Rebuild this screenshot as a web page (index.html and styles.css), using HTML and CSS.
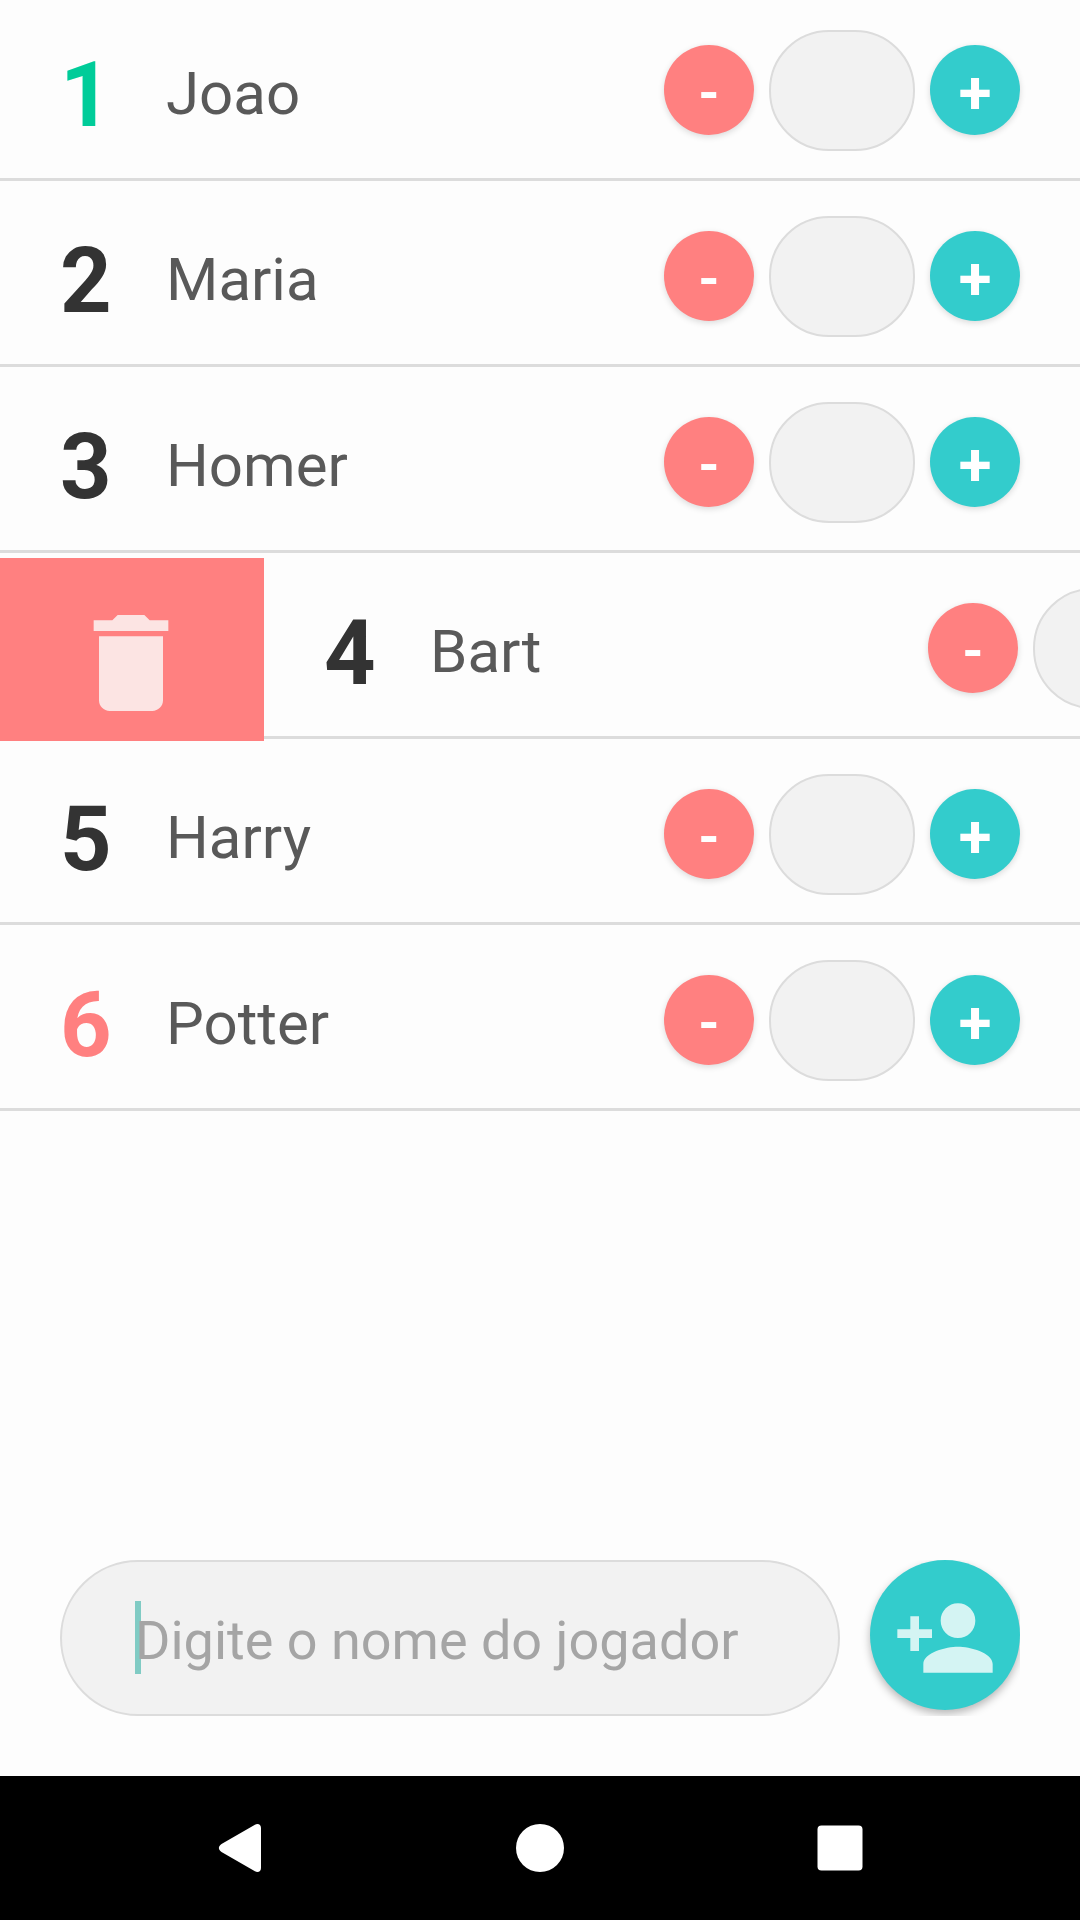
FILE: index.html
```html
<!DOCTYPE html>
<html lang="pt-BR">
<head>
<meta charset="utf-8">
<meta name="viewport" content="width=device-width, initial-scale=1">
<title>Jogadores</title>
<link rel="stylesheet" href="styles.css">
</head>
<body>
<main class="screen">
  <ol class="players">
    <li class="player">
      <div class="row">
        <span class="rank rank-first">1</span>
        <span class="name">Joao</span>
        <div class="score">
          <button class="step step-minus" type="button" aria-label="Diminuir pontos de Joao">-</button>
          <input class="points" type="text" inputmode="numeric" aria-label="Pontos de Joao">
          <button class="step step-plus" type="button" aria-label="Aumentar pontos de Joao">+</button>
        </div>
      </div>
    </li>
    <li class="player">
      <div class="row">
        <span class="rank">2</span>
        <span class="name">Maria</span>
        <div class="score">
          <button class="step step-minus" type="button" aria-label="Diminuir pontos de Maria">-</button>
          <input class="points" type="text" inputmode="numeric" aria-label="Pontos de Maria">
          <button class="step step-plus" type="button" aria-label="Aumentar pontos de Maria">+</button>
        </div>
      </div>
    </li>
    <li class="player">
      <div class="row">
        <span class="rank">3</span>
        <span class="name">Homer</span>
        <div class="score">
          <button class="step step-minus" type="button" aria-label="Diminuir pontos de Homer">-</button>
          <input class="points" type="text" inputmode="numeric" aria-label="Pontos de Homer">
          <button class="step step-plus" type="button" aria-label="Aumentar pontos de Homer">+</button>
        </div>
      </div>
    </li>
    <li class="player">
      <button class="delete" type="button" aria-label="Remover Bart">
        <svg class="delete-icon" viewBox="0 0 24 24" aria-hidden="true"><path d="M6 19c0 1.1.9 2 2 2h8c1.1 0 2-.9 2-2V7H6v12zM19 4h-3.5l-1-1h-5l-1 1H5v2h14V4z"/></svg>
      </button>
      <div class="row">
        <span class="rank">4</span>
        <span class="name">Bart</span>
        <div class="score">
          <button class="step step-minus" type="button" aria-label="Diminuir pontos de Bart">-</button>
          <input class="points" type="text" inputmode="numeric" aria-label="Pontos de Bart">
        </div>
      </div>
    </li>
    <li class="player">
      <div class="row">
        <span class="rank">5</span>
        <span class="name">Harry</span>
        <div class="score">
          <button class="step step-minus" type="button" aria-label="Diminuir pontos de Harry">-</button>
          <input class="points" type="text" inputmode="numeric" aria-label="Pontos de Harry">
          <button class="step step-plus" type="button" aria-label="Aumentar pontos de Harry">+</button>
        </div>
      </div>
    </li>
    <li class="player">
      <div class="row">
        <span class="rank rank-last">6</span>
        <span class="name">Potter</span>
        <div class="score">
          <button class="step step-minus" type="button" aria-label="Diminuir pontos de Potter">-</button>
          <input class="points" type="text" inputmode="numeric" aria-label="Pontos de Potter">
          <button class="step step-plus" type="button" aria-label="Aumentar pontos de Potter">+</button>
        </div>
      </div>
    </li>
  </ol>

  <form class="composer">
    <div class="field">
      <span class="caret"></span>
      <input class="field-input" type="text" placeholder="Digite o nome do jogador" aria-label="Nome do jogador">
    </div>
    <button class="add" type="button" aria-label="Adicionar jogador">
      <svg class="add-icon" viewBox="0 0 24 24" aria-hidden="true"><path d="M15 12c2.21 0 4-1.79 4-4s-1.79-4-4-4-4 1.79-4 4 1.79 4 4 4zm-9-2V7H4v3H1v2h3v3h2v-3h3v-2H6zm9 4c-2.67 0-8 1.34-8 4v2h16v-2c0-2.66-5.33-4-8-4z"/></svg>
    </button>
  </form>
</main>

<nav class="navbar" aria-label="Sistema">
  <button class="nav-button" type="button" aria-label="Voltar">
    <svg class="nav-icon" viewBox="0 0 48 48" aria-hidden="true"><path d="M38.500 1C41.500 -1 45 0 45 4V44C45 48 41.500 49 38.500 47L5.500 28C2 25.700 2 22.300 5.500 20Z"/></svg>
  </button>
  <button class="nav-button" type="button" aria-label="Início">
    <svg class="nav-icon" viewBox="0 0 48 48" aria-hidden="true"><circle cx="24" cy="24" r="24"/></svg>
  </button>
  <button class="nav-button" type="button" aria-label="Recentes">
    <svg class="nav-icon" viewBox="0 0 48 48" aria-hidden="true"><rect x="1.500" y="1.500" width="45" height="45" rx="4"/></svg>
  </button>
</nav>
</body>
</html>
```
FILE: styles.css
```css
:root {
  --surface: #fdfdfd;
  --field: #f2f2f2;
  --line: #dcdcdc;
  --coral: #ff8080;
  --teal: #33cccc;
}

* {
  box-sizing: border-box;
}

body {
  margin: 0;
  min-height: 100vh;
  display: flex;
  flex-direction: column;
  background: var(--surface);
  font-family: Roboto, sans-serif;
}

button,
input {
  margin: 0;
  padding: 0;
  border: 0;
  font-family: inherit;
  outline: 0;
}

.screen {
  flex: 1;
  display: flex;
  flex-direction: column;
  justify-content: space-between;
  overflow: hidden;
}

/* The list rests slightly scrolled under the top edge. */
.players {
  list-style: none;
  margin: -5px 0 0;
  padding: 0;
}

.player {
  display: flex;
  overflow-x: clip;
}

.row {
  flex: 0 0 100%;
  display: flex;
  align-items: center;
  padding: 35px 60px 27px;
  border-bottom: 3px solid var(--line);
}

.rank {
  width: 106px;
  padding-top: 10px;
  font-size: 90px;
  font-weight: 700;
  line-height: 106px;
  color: #333;
}

.rank-first {
  color: #00cc99;
}

.rank-last {
  color: var(--coral);
}

.name {
  flex: 1;
  padding-top: 6px;
  font-size: 60px;
  line-height: 70px;
  color: #595959;
}

.score {
  display: grid;
  grid-template-columns: 90px 146px 90px;
  align-items: start;
  gap: 15px;
}

.step {
  height: 90px;
  margin-top: 15px;
  padding-top: 5px;
  border-radius: 50%;
  color: #fff;
  font-size: 54px;
  font-weight: 700;
  line-height: 64px;
  box-shadow: 0 2px 6px rgba(0, 0, 0, 0.14);
}

.step-minus {
  background: var(--coral);
}

.step-plus {
  background: var(--teal);
  font-size: 60px;
}

.points {
  width: 100%;
  height: 121px;
  border: 2px solid var(--line);
  border-radius: 60px;
  background: var(--field);
  text-align: center;
  font-size: 54px;
}

.delete {
  flex: 0 0 264px;
  height: 183px;
  margin: 5px 0 -2px;
  padding: 26px 2px 0 0;
  display: flex;
  align-items: center;
  justify-content: center;
  background: var(--coral);
}

.delete-icon {
  width: 128px;
  height: 128px;
  fill: #fce4e3;
}

.composer {
  display: flex;
  align-items: flex-start;
  gap: 30px;
  margin: 60px;
  overflow: hidden;
}

.field {
  position: relative;
  flex: 1;
  height: 156px;
  border: 2px solid var(--line);
  border-radius: 78px;
  background: var(--field);
}

.caret {
  position: absolute;
  left: 73px;
  top: 39px;
  width: 6px;
  height: 73px;
  background: #80cbc4;
}

.field-input {
  position: relative;
  width: 100%;
  height: 100%;
  padding: 4px 73px 0;
  background: transparent;
  font-size: 54px;
  color: #595959;
}

.field-input::placeholder {
  color: #a5a5a5;
  opacity: 1;
}

.add {
  width: 150px;
  height: 150px;
  padding-top: 5px;
  display: flex;
  align-items: center;
  justify-content: center;
  border-radius: 50%;
  background: var(--teal);
  box-shadow: 0 4px 9px rgba(0, 0, 0, 0.28);
}

.add-icon {
  width: 104px;
  height: 104px;
  fill: #d4f4f3;
}

.navbar {
  display: grid;
  grid-template-columns: repeat(3, 1fr);
  height: 144px;
  padding: 0 90px;
  background: #000;
}

.nav-button {
  display: flex;
  align-items: center;
  justify-content: center;
  background: transparent;
}

.nav-icon {
  width: 48px;
  height: 48px;
  fill: #fff;
}
```
